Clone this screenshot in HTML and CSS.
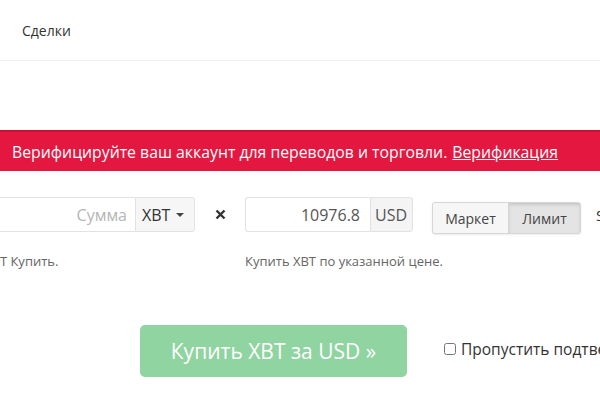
FILE: index.html
```html
<!DOCTYPE html>
<html lang="ru">
<head>
<meta charset="utf-8">
<title>Сделки</title>
<link rel="stylesheet" href="styles.css">
</head>
<body>
<nav class="nav"><span class="nav-item">Сделки</span></nav>
<div class="alert">Верифицируйте ваш аккаунт для переводов и торговли. <a class="alert-link" href="#">Верификация</a></div>
<div class="order-row">
  <div class="col col-qty">
    <div class="input-group">
      <input class="field field-qty" type="text" placeholder="Сумма">
      <span class="addon addon-select">XBT <span class="caret"></span></span>
    </div>
    <div class="help help-qty">XBT Купить.</div>
  </div>
  <div class="times">
    <svg width="11" height="11" viewBox="0 0 11 11"><path d="M1.5 1.5 L9.5 9.5 M9.5 1.5 L1.5 9.5" stroke="#333" stroke-width="2.4" stroke-linecap="butt"/></svg>
  </div>
  <div class="col col-price">
    <div class="input-group">
      <input class="field field-price" type="text" value="10976.8">
      <span class="addon addon-usd">USD</span>
    </div>
    <div class="help">Купить XBT по указанной цене.</div>
  </div>
  <div class="btn-group">
    <span class="seg">Маркет</span>
    <span class="seg seg-active">Лимит</span>
  </div>
  <span class="more">S</span>
</div>
<div class="submit-row">
  <button class="buy-btn" type="button">Купить XBT за USD »</button>
  <label class="skip"><input class="skip-box" type="checkbox"> Пропустить подтверждение</label>
</div>
</body>
</html>
```
FILE: styles.css
```css
html, body {
  margin: 0;
  padding: 0;
  background: #fff;
  overflow: hidden;
}
body {
  font-family: "Open Sans", "Liberation Sans", sans-serif;
  color: #333;
  width: 600px;
  height: 400px;
}
.nav {
  height: 60px;
  display: flex;
  align-items: center;
  padding-left: 22px;
  border-bottom: 1px solid #f1f1f1;
}
.nav-item {
  font-size: 14px;
  color: #333;
}
.alert {
  margin-top: 69px;
  height: 39px;
  border-top: 2px solid #c90f34;
  background: #e3173f;
  color: #fff;
  font-size: 15.8px;
  display: flex;
  align-items: center;
  padding-left: 12px;
  white-space: nowrap;
}
.alert-link {
  color: #fff;
  text-decoration: underline;
  margin-left: 5px;
}
.order-row {
  display: flex;
  align-items: flex-start;
  margin-top: 26px;
  margin-left: -20px;
  white-space: nowrap;
}
.order-row > * { flex-shrink: 0; }
.col-qty { width: 215px; }
.col-price { width: 168px; }
.input-group {
  display: flex;
  height: 35px;
}
.field {
  box-sizing: border-box;
  height: 35px;
  border: 1px solid #e2e2e2;
  border-right: none;
  border-radius: 3px 0 0 3px;
  font-family: inherit;
  font-size: 16px;
  color: #555;
  text-align: right;
  padding: 0 6px;
  outline: none;
  background: #fff;
  flex-shrink: 0;
}
.field::placeholder { color: #b5b5b5; }
.field-qty { width: 155px; padding-right: 8px; }
.field-price { width: 125px; padding-right: 10px; }
.addon {
  box-sizing: border-box;
  height: 35px;
  border: 1px solid #e2e2e2;
  border-radius: 0 3px 3px 0;
  background: #f4f4f4;
  font-size: 16px;
  color: #555;
  display: flex;
  align-items: center;
  padding: 0 4px;
  flex-shrink: 0;
}
.addon-usd { width: 43px; }
.addon-select {
  width: 60px;
  padding: 0 6px;
  background: #f6f6f6;
  color: #333;
  gap: 6px;
}
.caret {
  width: 0;
  height: 0;
  border-left: 4px solid transparent;
  border-right: 4px solid transparent;
  border-top: 4px solid #444;
}
.help {
  margin-top: 20px;
  font-size: 13px;
  color: #666;
}
.help-qty { padding-left: 4px; }
.times {
  width: 50px;
  height: 35px;
  display: flex;
  align-items: center;
  justify-content: center;
}
.btn-group {
  display: flex;
  margin-left: 19px;
  margin-top: 5px;
  height: 30px;
  border: 1px solid #d6d6d6;
  border-radius: 3px;
  background: #f6f6f6;
  box-shadow: 0 1px 2px rgba(0,0,0,0.08);
}
.seg {
  display: flex;
  align-items: center;
  justify-content: center;
  font-size: 14px;
  color: #444;
}
.seg:first-child { width: 75px; border-right: 1px solid #d6d6d6; }
.seg-active {
  width: 71px;
  background: #e4e4e4;
  box-shadow: inset 0 2px 3px rgba(0,0,0,0.12);
}
.more {
  margin-left: 15px;
  margin-top: 8px;
  font-size: 15px;
}
.submit-row {
  display: flex;
  align-items: center;
  margin-top: 55px;
  white-space: nowrap;
}
.submit-row > * { flex-shrink: 0; }
.buy-btn {
  margin-left: 140px;
  width: 267px;
  height: 52px;
  border: none;
  border-radius: 5px;
  background: #8fd4a1;
  color: #fff;
  font-family: inherit;
  font-size: 21px;
}
.skip {
  margin-left: 37px;
  margin-top: -5px;
  font-size: 15.5px;
  color: #333;
  display: flex;
  align-items: center;
}
.skip-box {
  margin: 0 5px 0 0;
  width: 12px;
  height: 12px;
}
```
